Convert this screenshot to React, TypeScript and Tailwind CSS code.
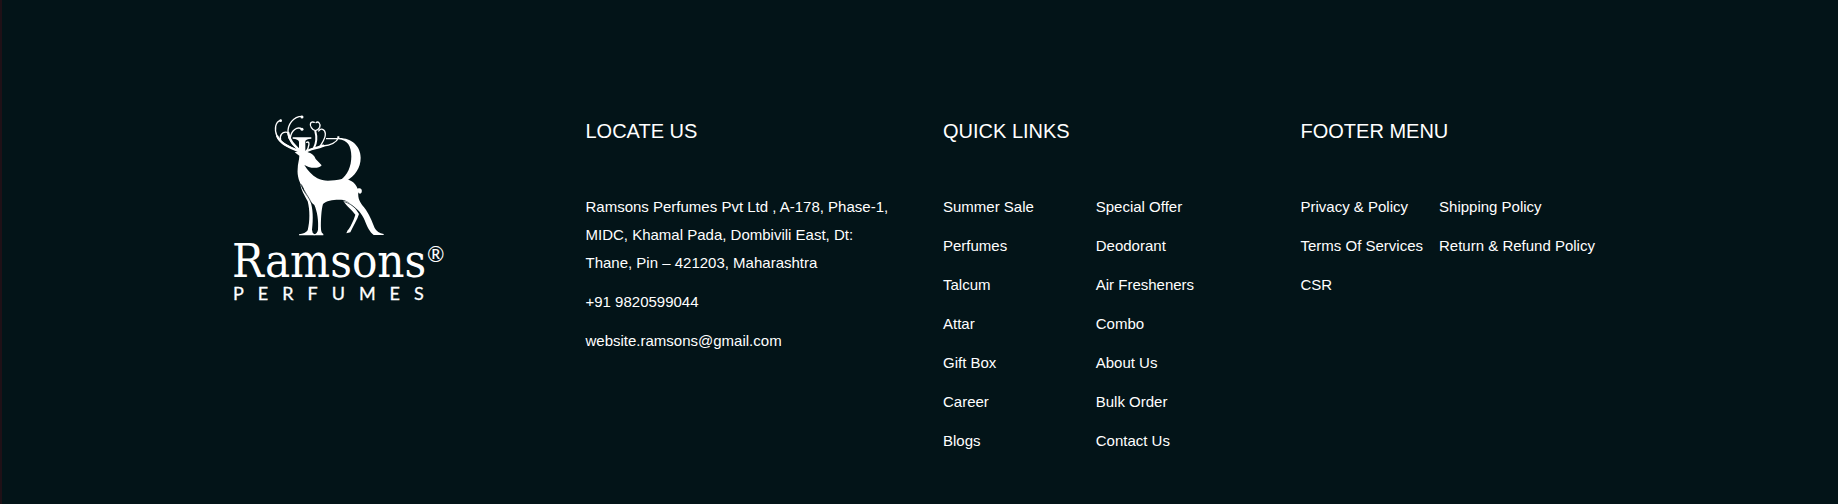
const quickLinks = [
  ['Summer Sale', 'Perfumes', 'Talcum', 'Attar', 'Gift Box', 'Career', 'Blogs'],
  ['Special Offer', 'Deodorant', 'Air Fresheners', 'Combo', 'About Us', 'Bulk Order', 'Contact Us'],
];

const footerMenu = [
  ['Privacy & Policy', 'Terms Of Services', 'CSR'],
  ['Shipping Policy', 'Return & Refund Policy'],
];

function Logo() {
  return (
    <svg viewBox="0 0 224 200" className="block w-56 max-w-full" fill="#fff" role="img" aria-label="Ramsons Perfumes">
      <g transform="translate(32 0) scale(0.33333)">
        {/* letter stem and bowl behind the deer */}
        <path d="M98 97H154V101Q138 102 136 108V142H117V110Q115 102 98 101Z" />
        <path d="M198 99H232V94H238V99C275 99 302 124 302 158C302 188 285 213 258 228L243 224C262 210 274 186 274 154C274 124 262 104 236 103H198Z" />
        {/* antlers */}
        <g fill="none" stroke="#fff" strokeLinecap="round">
          <path strokeWidth="4" d="M62 46C46 50 42 72 51 93C58 112 80 124 118 138" />
          <path strokeWidth="7" d="M52 94C60 114 84 126 120 140" />
          <path strokeWidth="4" d="M62 108C57 92 67 78 82 82" />
          <path strokeWidth="4" d="M126 34C101 34 82 57 84 85C86 108 103 122 122 140" />
          <path strokeWidth="7" d="M85 84C86 106 104 122 124 141" />
          <path strokeWidth="4" d="M127 73C111 62 94 77 91 98" />
          <path strokeWidth="4" d="M163 52C151 47 148 60 154 68Q160 77 166 77Q174 76 179 67C183 55 174 48 168 53" />
          <path strokeWidth="6" d="M166 79C171 97 171 111 162 128" />
          <path strokeWidth="4" d="M176 78C182 68 195 72 196 86C197 101 187 112 180 124" />
          <path strokeWidth="7" d="M136 142C148 130 168 132 190 122" />
          <path strokeWidth="4" d="M188 123C208 121 228 115 235 99" />
          <path strokeWidth="4" d="M140 112C150 106 149 126 137 142" />
        </g>
        <circle cx="62" cy="47" r="4" />
        <circle cx="126" cy="36" r="4.500" />
        <circle cx="126" cy="73" r="4.500" />
        {/* head, neck and torso */}
        <path d="M104 142L120 139L130 134L144 142C156 145 163 152 167 162L185 181C178 190 160 190 146 186L133 180C143 196 156 211 172 220C192 231 218 227 246 222C266 220 285 230 293 251C300 247 308 252 305 262C303 268 296 267 295 261C293 280 300 293 312 307C328 327 336 350 344 369Q352 384 371 387V390H341C330 382 321 365 314 346C307 326 290 309 274 299C266 292 260 288 250 285C226 283 201 286 189 297C184 313 182 347 183 373Q184 385 190 387V391H161V388Q172 386 174 374C176 347 172 320 163 300C149 290 136 269 130 249C118 235 111 211 113 192C113 176 118 164 118 152Z" />
        {/* second foreleg */}
        <path d="M121 236C128 258 143 274 151 289C159 310 160 342 156 374Q156 384 164 388V391H117V388Q136 386 143 376C150 350 150 315 143 289C133 269 123 255 121 236Z" />
        {/* second hind leg */}
        <path d="M249 287C264 287 279 300 289 315L297 327C292 344 281 360 271 382L259 385L263 376C269 370 281 347 286 329C275 314 263 306 249 287Z" />
        <path fill="none" stroke="#031418" strokeWidth="2" d="M124 238C132 260 146 275 155 295M246 290C260 289 276 301 284 308" />
      </g>
      <text x="4" y="172" fontSize="47" fontFamily="'DejaVu Serif Condensed', 'DejaVu Serif', serif">Ramsons</text>
      <text x="199" y="157" fontSize="21" fontFamily="Lato, sans-serif">®</text>
      <text x="5" y="195" fontSize="18" className="tracking-[14px]" stroke="#fff" strokeWidth="0.3" fontFamily="Lato, sans-serif">PERFUMES</text>
    </svg>
  );
}

function Heading({ children }: { children: string }) {
  return <h2 className="mb-12 text-xl leading-7">{children}</h2>;
}

function LinkList({ items }: { items: string[] }) {
  return (
    <ul className="flex flex-col gap-[11px]">
      {items.map((item) => (
        <li key={item} className="whitespace-nowrap">
          <a href="#" className="block hover:underline">{item}</a>
        </li>
      ))}
    </ul>
  );
}

export default function App() {
  return (
    <footer className="min-h-screen border-x-2 border-l-[#1f1117] border-r-[#031418] bg-[#031418] pt-[105px] pb-10 font-['Liberation_Sans',Arial,sans-serif] text-[15px] leading-7 text-white">
      <div className="mx-auto grid max-w-[1430px] grid-cols-1 gap-y-10 md:grid-cols-2 xl:grid-cols-4">
        <div className="pl-6">
          <Logo />
        </div>
        <section className="pt-3 pr-4 pl-6">
          <Heading>LOCATE US</Heading>
          <address className="flex flex-col gap-[11px] not-italic">
            <p>Ramsons Perfumes Pvt Ltd , A-178, Phase-1, MIDC, Khamal Pada, Dombivili East, Dt: Thane, Pin – 421203, Maharashtra</p>
            <a href="tel:+919820599044">+91 9820599044</a>
            <a href="mailto:website.ramsons@gmail.com">website.ramsons@gmail.com</a>
          </address>
        </section>
        <nav aria-label="Quick links" className="pt-3 pr-7 pl-6">
          <Heading>QUICK LINKS</Heading>
          <div className="grid grid-cols-2">
            {quickLinks.map((items) => <LinkList key={items[0]} items={items} />)}
          </div>
        </nav>
        <nav aria-label="Footer menu" className="pt-3 pl-6">
          <Heading>FOOTER MENU</Heading>
          <div className="flex gap-4">
            {footerMenu.map((items) => <LinkList key={items[0]} items={items} />)}
          </div>
        </nav>
      </div>
    </footer>
  );
}
